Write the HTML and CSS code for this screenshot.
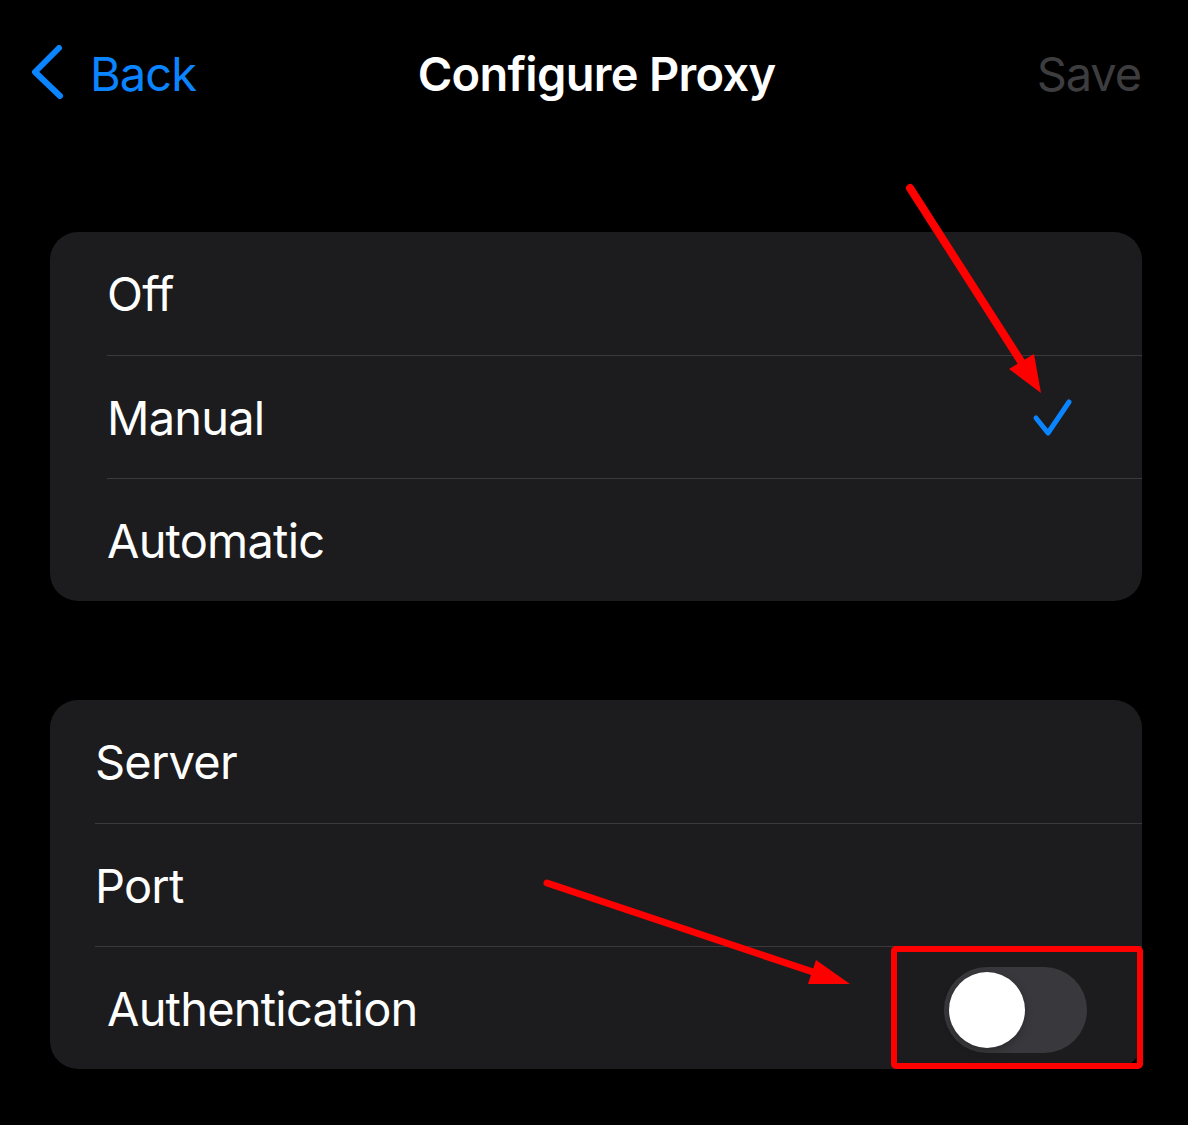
FILE: index.html
```html
<!DOCTYPE html>
<html lang="en">
<head>
<meta charset="utf-8">
<title>Configure Proxy</title>
<link rel="stylesheet" href="styles.css">
</head>
<body>
<div class="screen">
  <header class="nav">
    <div class="nav-left">
      <svg class="chevron" width="40" height="56" viewBox="0 0 40 56">
        <polyline points="27,3 3,27 28,51" fill="none" stroke="#0a84ff" stroke-width="6" stroke-linecap="round" stroke-linejoin="round"/>
      </svg>
      <span class="back">Back</span>
    </div>
    <div class="nav-title">Configure Proxy</div>
    <div class="nav-right"><span class="save">Save</span></div>
  </header>

  <section class="card card-mode">
    <div class="row"><div class="cell">Off</div></div>
    <div class="row"><div class="cell sep">Manual
      <svg class="check" width="44" height="44" viewBox="0 0 44 44">
        <polyline points="6,24 18,39 39,8" fill="none" stroke="#0a84ff" stroke-width="5" stroke-linecap="round" stroke-linejoin="round"/>
      </svg></div></div>
    <div class="row"><div class="cell sep">Automatic</div></div>
  </section>

  <section class="card card-server">
    <div class="row"><div class="cell">Server</div></div>
    <div class="row"><div class="cell sep">Port</div></div>
    <div class="row"><div class="cell sep"><span class="auth-label">Authentication</span>
      <div class="toggle"><div class="knob"></div></div></div></div>
  </section>

  <svg class="annotations" width="1188" height="1125" viewBox="0 0 1188 1125">
    <line x1="910" y1="188" x2="1022" y2="363" stroke="#ff0000" stroke-width="8" stroke-linecap="round"/>
    <polygon points="1041,393 1009,369 1034,354" fill="#ff0000"/>
    <line x1="547" y1="883" x2="813" y2="972" stroke="#ff0000" stroke-width="7" stroke-linecap="round"/>
    <polygon points="850,984 816,960 808,984" fill="#ff0000"/>
    <rect x="894" y="949" width="246" height="117" fill="none" stroke="#ff0000" stroke-width="6" rx="2"/>
  </svg>
</div>
</body>
</html>
```

FILE: styles.css
```css
html, body {
  margin: 0;
  padding: 0;
  background: #000;
}

.screen {
  position: relative;
  width: 1188px;
  height: 1125px;
  overflow: hidden;
  background: #000;
  font-family: Inter, "Liberation Sans", sans-serif;
  color: #fff;
}

.nav {
  height: 147px;
  display: grid;
  grid-template-columns: 1fr auto 1fr;
  align-items: center;
  padding: 0 47px 0 52px;
}

.nav-left {
  display: flex;
  align-items: center;
  gap: 18px;
  margin-left: -20px;
}

.chevron {
  display: block;
  margin-top: -1px;
}

.back {
  color: #0a84ff;
  font-size: 47px;
  letter-spacing: -0.9px;
}

.nav-title {
  font-size: 47px;
  font-weight: 600;
  letter-spacing: -0.7px;
  text-align: center;
}

.nav-right {
  text-align: right;
}

.save {
  color: #3d3d3f;
  font-size: 47px;
  letter-spacing: -1.1px;
}

.card {
  margin: 0 46px 0 50px;
  background: #1c1c1e;
  border-radius: 28px;
  overflow: hidden;
}

.card-mode {
  margin-top: 85px;
}

.card-server {
  margin-top: 99px;
}

.row {
  height: 123px;
  display: flex;
}

.card-mode .row {
  padding-left: 57px;
}

.card-server .row {
  padding-left: 45px;
}

.cell {
  flex: 1;
  display: flex;
  align-items: center;
  font-size: 47px;
  letter-spacing: -0.8px;
  box-sizing: border-box;
}

.cell.sep {
  border-top: 1px solid #3a3a3c;
}

.check {
  margin-left: auto;
  margin-right: 68px;
  margin-top: -3px;
}

.auth-label {
  margin-left: 12px;
}

.toggle {
  margin-left: auto;
  margin-right: 55px;
  margin-top: 4px;
  width: 143px;
  height: 86px;
  border-radius: 43px;
  background: #39393d;
  box-sizing: border-box;
  padding: 5px;
}

.knob {
  width: 76px;
  height: 76px;
  border-radius: 50%;
  background: #fff;
  box-shadow: 0 3px 8px rgba(0, 0, 0, 0.25), 0 0 1px rgba(0, 0, 0, 0.2);
}

.annotations {
  position: absolute;
  top: 0;
  left: 0;
  pointer-events: none;
}
```
